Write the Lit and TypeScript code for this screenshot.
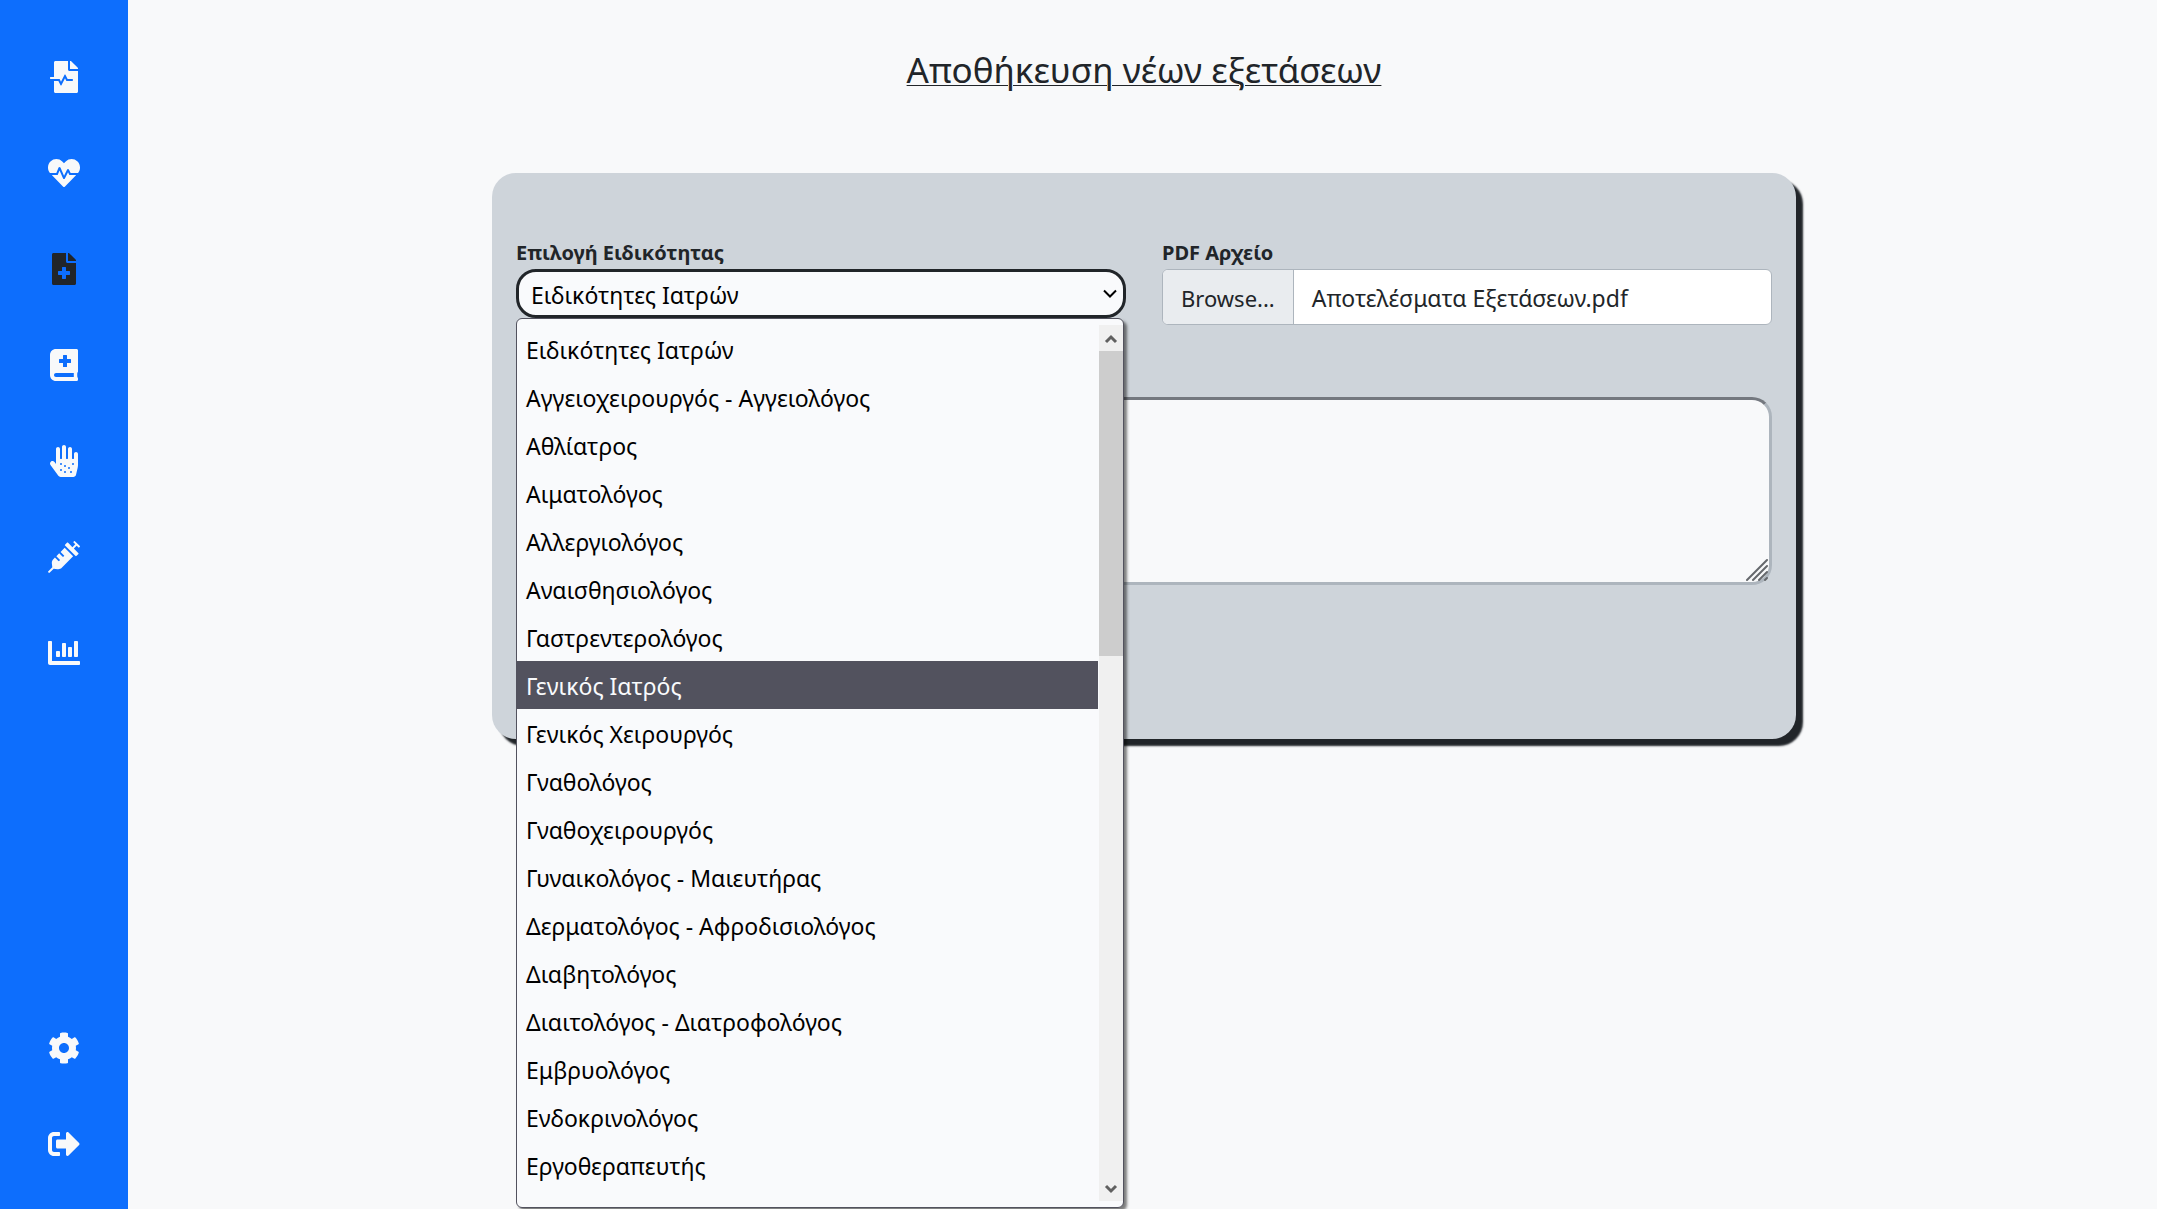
import { LitElement, html, css, svg } from "lit";
import { customElement, state } from "lit/decorators.js";

interface NavItem {
  label: string;
  width: number;
  path: string;
  active?: boolean;
}

const MAIN_NAV: NavItem[] = [
  {
    label: "Εξετάσεις",
    width: 448,
    path: "M288 136V0H88C74.700 0 64 10.700 64 24v232H8c-4.400 0-8 3.600-8 8v16c0 4.400 3.600 8 8 8h140.900c3 0 5.800 1.700 7.200 4.400l19.900 39.800 56.800-113.700c2.900-5.900 11.400-5.900 14.300 0l34.700 69.500H352c8.800 0 16 7.200 16 16s-7.200 16-16 16h-89.900L240 275.800l-56.800 113.700c-2.900 5.900-11.400 5.900-14.300 0L134.100 320H64v168c0 13.300 10.700 24 24 24h336c13.300 0 24-10.700 24-24V160H312c-13.200 0-24-10.800-24-24zm153-31L343.100 7c-4.500-4.500-10.600-7-17-7H320v128h128v-6.100c0-6.300-2.500-12.400-7-16.900z",
  },
  {
    label: "Υγεία",
    width: 512,
    path: "M320.2 243.8l-49.7 99.400c-6 12.100-23.400 11.700-28.900-.6l-56.900-126.300-30 71.700H60.600l182.500 186.500c7.100 7.300 18.600 7.300 25.700 0L451.400 288H342.300l-22.100-44.200zM473.700 73.900l-2.400-2.500c-51.500-52.600-135.800-52.600-187.400 0L256 100l-27.900-28.500c-51.500-52.700-135.900-52.700-187.400 0l-2.400 2.400C-10.400 123.700-12.500 203 31 256h102.400l35.900-86.200c5.400-12.900 23.600-13.100 29.200-.4l58.200 129.300 49-97.900c5.900-11.800 22.700-11.800 28.600 0l27.600 55.200H481c43.500-53 41.400-132.300-7.300-182.100z",
  },
  {
    label: "Νέα εξέταση",
    width: 384,
    active: true,
    path: "M377 105L279.100 7c-4.500-4.500-10.600-7-17-7H256v128h128v-6.100c0-6.300-2.500-12.400-7-16.900zm-153 31V0H24C10.700 0 0 10.700 0 24v464c0 13.300 10.700 24 24 24h336c13.300 0 24-10.700 24-24V160H248c-13.200 0-24-10.800-24-24zm64 160v48c0 4.400-3.600 8-8 8h-56v56c0 4.400-3.600 8-8 8h-48c-4.400 0-8-3.600-8-8v-56h-56c-4.400 0-8-3.600-8-8v-48c0-4.400 3.600-8 8-8h56v-56c0-4.400 3.600-8 8-8h48c4.400 0 8 3.600 8 8v56h56c4.400 0 8 3.600 8 8z",
  },
  {
    label: "Ιατρικό βιβλίο",
    width: 448,
    path: "M448 358.400V25.600c0-16-9.600-25.600-25.600-25.600H96C41.600 0 0 41.600 0 96v320c0 54.400 41.600 96 96 96h326.400c12.800 0 25.600-9.600 25.600-25.600v-16q0-9.600-9.600-19.200c-3.200-16-3.200-60.800 0-73.600q9.600-4.800 9.600-19.200zM144 168a8 8 0 0 1 8-8h56v-56a8 8 0 0 1 8-8h48a8 8 0 0 1 8 8v56h56a8 8 0 0 1 8 8v48a8 8 0 0 1-8 8h-56v56a8 8 0 0 1-8 8h-48a8 8 0 0 1-8-8v-56h-56a8 8 0 0 1-8-8zm236.800 280H96c-19.200 0-32-12.800-32-32s16-32 32-32h284.800z",
  },
  {
    label: "Αλλεργίες",
    width: 448,
    path: "M416 112c-17.600 0-32 14.400-32 32v72c0 4.400-3.600 8-8 8h-16c-4.400 0-8-3.600-8-8V64c0-17.600-14.400-32-32-32s-32 14.400-32 32v152c0 4.400-3.600 8-8 8h-16c-4.400 0-8-3.600-8-8V32c0-17.600-14.400-32-32-32s-32 14.400-32 32v184c0 4.400-3.600 8-8 8h-16c-4.400 0-8-3.600-8-8V64c0-17.600-14.400-32-32-32S96 46.400 96 64v241l-23.600-32.500c-13-17.900-38-21.800-55.900-8.800s-21.800 38-8.800 55.900l125.600 172.700c9 12.400 23.500 19.800 38.800 19.800h197.600c22.300 0 41.600-15.300 46.700-37l26.500-112.700c3.200-13.700 4.900-28.300 5.100-42.300V144c0-17.600-14.400-32-32-32zM160 304a16 16 0 1 0 32 0a16 16 0 1 0-32 0zM224 336a16 16 0 1 0 32 0a16 16 0 1 0-32 0zM352 304a16 16 0 1 0 32 0a16 16 0 1 0-32 0zM288 368a16 16 0 1 0 32 0a16 16 0 1 0-32 0zM160 400a16 16 0 1 0 32 0a16 16 0 1 0-32 0zM224 432a16 16 0 1 0 32 0a16 16 0 1 0-32 0zM320 432a16 16 0 1 0 32 0a16 16 0 1 0-32 0z",
  },
  {
    label: "Εμβόλια",
    width: 512,
    path: "M201.500 174.800l55.700 55.800c3.100 3.100 3.100 8.200 0 11.300l-11.300 11.300c-3.100 3.100-8.200 3.100-11.300 0l-55.700-55.800-45.300 45.300 55.800 55.800c3.100 3.100 3.100 8.200 0 11.300l-11.300 11.300c-3.100 3.100-8.200 3.100-11.300 0L111 265.200l-26.400 26.400c-17.300 17.300-25.600 41.100-23 65.400l7.100 63.600L2.300 487c-3.100 3.100-3.100 8.200 0 11.300l11.300 11.300c3.100 3.100 8.200 3.100 11.300 0l66.300-66.300 63.600 7.100c23.900 2.600 47.900-5.400 65.400-23l181.900-181.900-135.700-135.700-64.900 65zm308.200-93.300L430.500 2.300c-3.100-3.100-8.200-3.100-11.300 0l-11.300 11.300c-3.100 3.100-3.100 8.200 0 11.300l28.300 28.300-45.300 45.300-56.600-56.600-17-17c-3.100-3.100-8.200-3.100-11.300 0l-33.900 33.900c-3.100 3.100-3.100 8.200 0 11.300l17 17L424.800 223l17 17c3.100 3.100 8.200 3.100 11.300 0l33.900-34c3.100-3.100 3.100-8.200 0-11.300l-73.500-73.500 45.300-45.300 28.300 28.300c3.100 3.100 8.200 3.100 11.300 0l11.300-11.300c3.100-3.200 3.100-8.200 0-11.400z",
  },
  {
    label: "Στατιστικά",
    width: 512,
    path: "M332.800 320h38.400c6.400 0 12.800-6.400 12.800-12.800V172.800c0-6.400-6.400-12.800-12.800-12.800h-38.400c-6.400 0-12.800 6.400-12.800 12.800v134.400c0 6.400 6.400 12.800 12.800 12.800zm96 0h38.400c6.400 0 12.800-6.400 12.800-12.800V76.800c0-6.400-6.400-12.800-12.800-12.800h-38.400c-6.400 0-12.800 6.400-12.800 12.800v230.400c0 6.400 6.400 12.800 12.800 12.800zm-288 0h38.400c6.400 0 12.800-6.400 12.800-12.800v-70.400c0-6.400-6.400-12.800-12.800-12.800h-38.400c-6.400 0-12.800 6.400-12.800 12.800v70.400c0 6.400 6.400 12.800 12.800 12.800zm96 0h38.400c6.400 0 12.800-6.400 12.800-12.800V108.800c0-6.400-6.400-12.800-12.800-12.800h-38.400c-6.400 0-12.800 6.400-12.800 12.800v198.400c0 6.400 6.400 12.800 12.800 12.800zM496 384H64V80c0-8.840-7.160-16-16-16H16C7.160 64 0 71.160 0 80v336c0 17.670 14.330 32 32 32h464c8.840 0 16-7.160 16-16v-32c0-8.840-7.160-16-16-16z",
  },
];

const FOOT_NAV: NavItem[] = [
  {
    label: "Ρυθμίσεις",
    width: 512,
    path: "M487.400 315.700l-42.600-24.600c4.300-23.200 4.300-47 0-70.200l42.600-24.600c4.900-2.800 7.100-8.600 5.500-14-11.100-35.600-30-67.800-54.700-94.600-3.800-4.100-10-5.100-14.800-2.300L380.800 110c-17.900-15.400-38.500-27.300-60.800-35.100V25.800c0-5.600-3.900-10.500-9.400-11.700-36.700-8.200-74.300-7.800-109.200 0-5.500 1.200-9.400 6.100-9.400 11.700V75c-22.200 7.900-42.800 19.800-60.800 35.100L88.700 85.500c-4.900-2.800-11-1.900-14.800 2.300-24.700 26.700-43.600 58.900-54.700 94.600-1.700 5.400.6 11.200 5.500 14L67.300 221c-4.300 23.200-4.300 47 0 70.200l-42.600 24.600c-4.900 2.800-7.100 8.600-5.500 14 11.100 35.600 30 67.800 54.700 94.600 3.800 4.100 10 5.100 14.800 2.300l42.600-24.600c17.900 15.400 38.500 27.300 60.800 35.100v49.200c0 5.600 3.900 10.500 9.400 11.700 36.700 8.200 74.300 7.800 109.200 0 5.500-1.200 9.400-6.100 9.400-11.700v-49.200c22.200-7.900 42.800-19.800 60.800-35.100l42.600 24.600c4.900 2.800 11 1.900 14.800-2.300 24.700-26.700 43.600-58.900 54.700-94.600 1.500-5.500-.7-11.300-5.600-14.100zM256 336c-44.100 0-80-35.900-80-80s35.900-80 80-80 80 35.900 80 80-35.900 80-80 80z",
  },
  {
    label: "Αποσύνδεση",
    width: 512,
    path: "M497 273L329 441c-15 15-41 4.500-41-17v-96H152c-13.300 0-24-10.700-24-24v-96c0-13.300 10.700-24 24-24h136V88c0-21.400 25.900-32 41-17l168 168c9.300 9.400 9.300 24.600 0 34zM192 436v-40c0-6.600-5.400-12-12-12H96c-17.700 0-32-14.300-32-32V160c0-17.700 14.300-32 32-32h84c6.600 0 12-5.400 12-12V76c0-6.600-5.400-12-12-12H96c-53 0-96 43-96 96v192c0 53 43 96 96 96h84c6.600 0 12-5.400 12-12z",
  },
];

const SPECIALTIES = [
  "Ειδικότητες Ιατρών",
  "Αγγειοχειρουργός - Αγγειολόγος",
  "Αθλίατρος",
  "Αιματολόγος",
  "Αλλεργιολόγος",
  "Αναισθησιολόγος",
  "Γαστρεντερολόγος",
  "Γενικός Ιατρός",
  "Γενικός Χειρουργός",
  "Γναθολόγος",
  "Γναθοχειρουργός",
  "Γυναικολόγος - Μαιευτήρας",
  "Δερματολόγος - Αφροδισιολόγος",
  "Διαβητολόγος",
  "Διαιτολόγος - Διατροφολόγος",
  "Εμβρυολόγος",
  "Ενδοκρινολόγος",
  "Εργοθεραπευτής",
];

@customElement("side-bar")
export class SideBar extends LitElement {
  static styles = css`
    :host {
      display: flex;
      flex-direction: column;
      justify-content: space-between;
      box-sizing: border-box;
      padding: 29px 0 17px;
      background: #0d6efd;
    }
    .group {
      display: flex;
      flex-direction: column;
    }
    .link {
      display: flex;
      align-items: center;
      justify-content: center;
      height: 96px;
      color: #f8f9fa;
    }
    .active {
      color: #212529;
    }
    .icon {
      height: 32px;
      fill: currentColor;
    }
  `;

  private link(item: NavItem) {
    return html`<a
      class="link ${item.active ? "active" : ""}"
      href="#"
      aria-label=${item.label}
    >
      <svg class="icon" viewBox="0 0 ${item.width} 512" aria-hidden="true">
        ${svg`<path fill-rule="evenodd" d=${item.path}></path>`}
      </svg>
    </a>`;
  }

  render() {
    return html`
      <nav class="group">${MAIN_NAV.map((i) => this.link(i))}</nav>
      <nav class="group">${FOOT_NAV.map((i) => this.link(i))}</nav>
    `;
  }
}

@customElement("specialty-picker")
export class SpecialtyPicker extends LitElement {
  @state() private highlighted = 7;

  static styles = css`
    .label {
      display: block;
      font-size: 20px;
      font-weight: 700;
      line-height: 32px;
    }
    .control {
      position: relative;
    }
    .select {
      display: block;
      width: 100%;
      height: 49px;
      box-sizing: border-box;
      padding: 2px 12px 0;
      appearance: none;
      border: 3px solid #212529;
      border-radius: 20px;
      outline: none;
      background: #f9fafc;
      color: #000;
      font: inherit;
    }
    .chevron {
      position: absolute;
      right: 8px;
      top: 18px;
      width: 16px;
      height: 14px;
      fill: none;
      stroke: #000;
      stroke-width: 2;
      pointer-events: none;
    }
    .popup {
      position: absolute;
      top: 100%;
      left: 0;
      right: 2px;
      z-index: 2;
      display: flex;
      box-sizing: border-box;
      padding: 6px 0;
      border: 1px solid #52525e;
      border-radius: 6px;
      background: #f9fafc;
      box-shadow: 3px 3px 3px rgba(0, 0, 0, 0.5);
      color: #000;
    }
    .list {
      flex: 1;
      margin: 0;
      padding: 0 0 12px;
      list-style: none;
    }
    .option {
      height: 48px;
      padding-left: 9px;
      line-height: 50px;
    }
    .highlighted {
      background: #52525e;
      color: #f9fafc;
    }
    .scrollbar {
      display: flex;
      flex-direction: column;
      width: 24px;
      margin-left: 1px;
      background: #f0f0f0;
    }
    .arrow {
      width: 24px;
      height: 26px;
      fill: none;
      stroke: #606060;
      stroke-width: 3;
    }
    .track {
      flex: 1;
    }
    .thumb {
      height: 37%;
      background: #cdcdcd;
    }
  `;

  render() {
    return html`
      <label class="label" for="specialty">Επιλογή Ειδικότητας</label>
      <div class="control">
        <select class="select" id="specialty">
          ${SPECIALTIES.map((s) => html`<option>${s}</option>`)}
        </select>
        <svg class="chevron" viewBox="0 0 16 14" aria-hidden="true">
          <path d="M2 3.500l6 6 6-6"></path>
        </svg>
        <div class="popup">
          <ul class="list" role="listbox" aria-label="Επιλογή Ειδικότητας">
            ${SPECIALTIES.map(
              (s, i) => html`<li
                class="option ${i === this.highlighted ? "highlighted" : ""}"
                role="option"
                aria-selected=${i === this.highlighted ? "true" : "false"}
                @mouseenter=${() => (this.highlighted = i)}
              >${s}</li>`,
            )}
          </ul>
          <div class="scrollbar" aria-hidden="true">
            <svg class="arrow" viewBox="0 0 24 26"><path d="M7 17l5-5 5 5"></path></svg>
            <div class="track"><div class="thumb"></div></div>
            <svg class="arrow" viewBox="0 0 24 26"><path d="M7 11l5 5 5-5"></path></svg>
          </div>
        </div>
      </div>
    `;
  }
}

@customElement("file-field")
export class FileField extends LitElement {
  static styles = css`
    .label {
      display: block;
      font-size: 20px;
      font-weight: 700;
      line-height: 32px;
    }
    .field {
      position: relative;
      display: flex;
      box-sizing: border-box;
      height: 56px;
      overflow: hidden;
      border: 1px solid #adb5bd;
      border-radius: 6px;
      background: #fff;
      line-height: 56px;
    }
    .native {
      position: absolute;
      inset: 0;
      opacity: 0;
    }
    .browse {
      padding: 0 18px;
      border-right: 1px solid #adb5bd;
      background: #e9ecef;
      font-size: 22px;
    }
    .name {
      padding: 0 18px;
    }
  `;

  render() {
    return html`
      <label class="label" for="file">PDF Αρχείο</label>
      <div class="field">
        <span class="browse">Browse...</span>
        <span class="name">Αποτελέσματα Εξετάσεων.pdf</span>
        <input class="native" id="file" type="file" accept="application/pdf" />
      </div>
    `;
  }
}

@customElement("app-root")
export class AppRoot extends LitElement {
  static styles = css`
    :host {
      display: grid;
      grid-template-columns: 128px minmax(0, 1fr);
      column-gap: 3px;
      min-height: 100vh;
      background: #f8f9fa;
      color: #212529;
      font-family: "Noto Sans", "Open Sans", sans-serif;
      font-size: 23px;
    }
    .main {
      display: flex;
      flex-direction: column;
      align-items: center;
      padding: 44px 24px 0;
    }
    .title {
      margin: 0 0 77px;
      font-size: 35px;
      font-weight: 400;
      line-height: 52px;
      text-decoration: underline;
      text-decoration-thickness: 1px;
      text-underline-offset: 2px;
    }
    .card {
      display: grid;
      grid-template-columns: 1fr 1fr;
      gap: 72px 36px;
      box-sizing: border-box;
      width: 100%;
      max-width: 1304px;
      padding: 64px 24px 154px;
      border-radius: 24px;
      background: #ced4da;
      box-shadow: 7px 7px 2px #212529;
    }
    .notes {
      position: relative;
      grid-column: 1 / -1;
    }
    .text {
      display: block;
      box-sizing: border-box;
      width: 100%;
      height: 188px;
      padding: 12px;
      resize: none;
      border: 3px solid;
      border-color: #74787f #adb5bd #adb5bd #74787f;
      border-radius: 20px;
      background: #f8f9fa;
      color: inherit;
      font: inherit;
    }
    .grip {
      position: absolute;
      right: 2px;
      bottom: 3px;
      width: 24px;
      height: 24px;
      fill: none;
      stroke: #65686c;
      stroke-width: 2;
      stroke-linecap: round;
      pointer-events: none;
    }
  `;

  render() {
    return html`
      <side-bar></side-bar>
      <main class="main">
        <h1 class="title">Αποθήκευση νέων εξετάσεων</h1>
        <form class="card">
          <specialty-picker></specialty-picker>
          <file-field></file-field>
          <div class="notes">
            <textarea class="text" aria-label="Σημειώσεις"></textarea>
            <svg class="grip" viewBox="0 0 24 24" aria-hidden="true">
              <path d="M1 22L21 2M7 22L21 8M13 22l8-8M19 22l2-2"></path>
            </svg>
          </div>
        </form>
      </main>
    `;
  }
}
